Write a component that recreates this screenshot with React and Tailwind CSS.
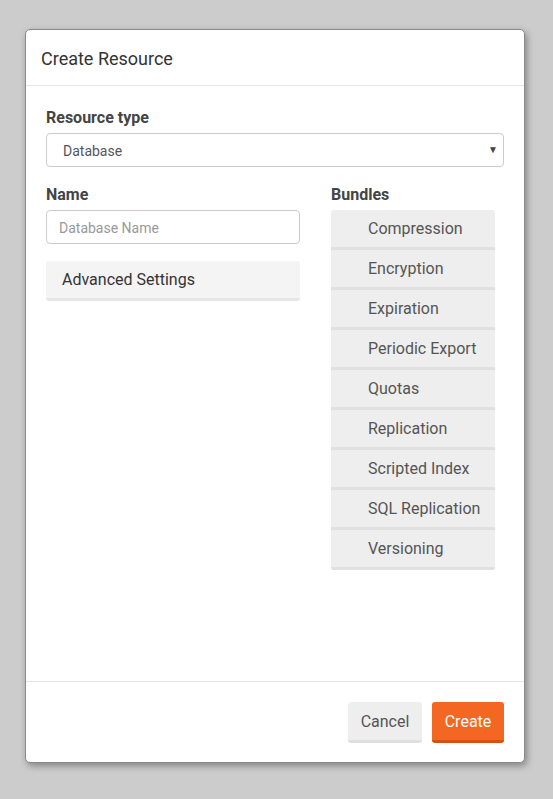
const bundles = [
  "Compression",
  "Encryption",
  "Expiration",
  "Periodic Export",
  "Quotas",
  "Replication",
  "Scripted Index",
  "SQL Replication",
  "Versioning",
];

export default function App() {
  return (
    <div
      className="min-h-[799px] w-full bg-[#cccccc] pt-[29px] pl-[25px]"
      style={{ fontFamily: "Roboto, 'Noto Sans', sans-serif" }}
    >
      <div className="w-[500px] h-[734px] flex flex-col bg-white border border-[#8a8a8a] rounded-[5px] shadow-[2px_3px_7px_rgba(0,0,0,0.35)]">
        {/* header */}
        <div className="h-[56px] flex items-center px-[15px] border-b border-[#e5e5e5]">
          <h4 className="text-[18px] text-[#333] leading-none pt-[2px]">Create Resource</h4>
        </div>

        {/* body */}
        <div className="flex-1 px-[20px] pt-[21px]">
          <label className="block text-[16px] font-bold text-[#444] leading-[21px] mb-[5px]">
            Resource type
          </label>
          <div className="relative h-[34px] border border-[#ccc] rounded-[4px] flex items-center pl-[16px] pt-[2px]">
            <span className="text-[14px] text-[#555]">Database</span>
            <span className="absolute right-[5px] top-[8px] text-[10px] text-[#444]">▼</span>
          </div>

          <div className="flex mt-[17px]">
            <div className="w-[254px]">
              <label className="block text-[16px] font-bold text-[#444] leading-[21px] mb-[5px]">
                Name
              </label>
              <div className="h-[34px] border border-[#ccc] rounded-[4px] flex items-center pl-[12px] pt-[2px]">
                <span className="text-[14px] text-[#999]">Database Name</span>
              </div>
              <div className="mt-[17px] h-[40px] bg-[#f4f4f4] border-b-[3px] border-[#e6e6e6] rounded-[3px] flex items-center pl-[16px] pt-[1px]">
                <span className="text-[16px] text-[#333]">Advanced Settings</span>
              </div>
            </div>

            <div className="ml-[31px] w-[164px]">
              <label className="block text-[16px] font-bold text-[#444] leading-[21px] mb-[5px]">
                Bundles
              </label>
              <div className="flex flex-col rounded-[3px] overflow-hidden">
                {bundles.map((b) => (
                  <div
                    key={b}
                    className="h-[40px] bg-[#eeeeee] border-b-[3px] border-[#e0e0e0] flex items-center pl-[37px]"
                  >
                    <span className="text-[16px] text-[#555]">{b}</span>
                  </div>
                ))}
              </div>
            </div>
          </div>
        </div>

        {/* footer */}
        <div className="border-t border-[#e5e5e5] pt-[20px] pb-[19px] pr-[20px] flex justify-end gap-[10px]">
          <button className="h-[41px] w-[74px] bg-[#eeeeee] border-b-[3px] border-[#e0e0e0] rounded-[3px] text-[16px] text-[#555] pt-[1px]">
            Cancel
          </button>
          <button className="h-[41px] w-[72px] bg-[#f46722] border-b-[3px] border-[#d9500e] rounded-[3px] text-[16px] text-white pt-[1px]">
            Create
          </button>
        </div>
      </div>
    </div>
  );
}
